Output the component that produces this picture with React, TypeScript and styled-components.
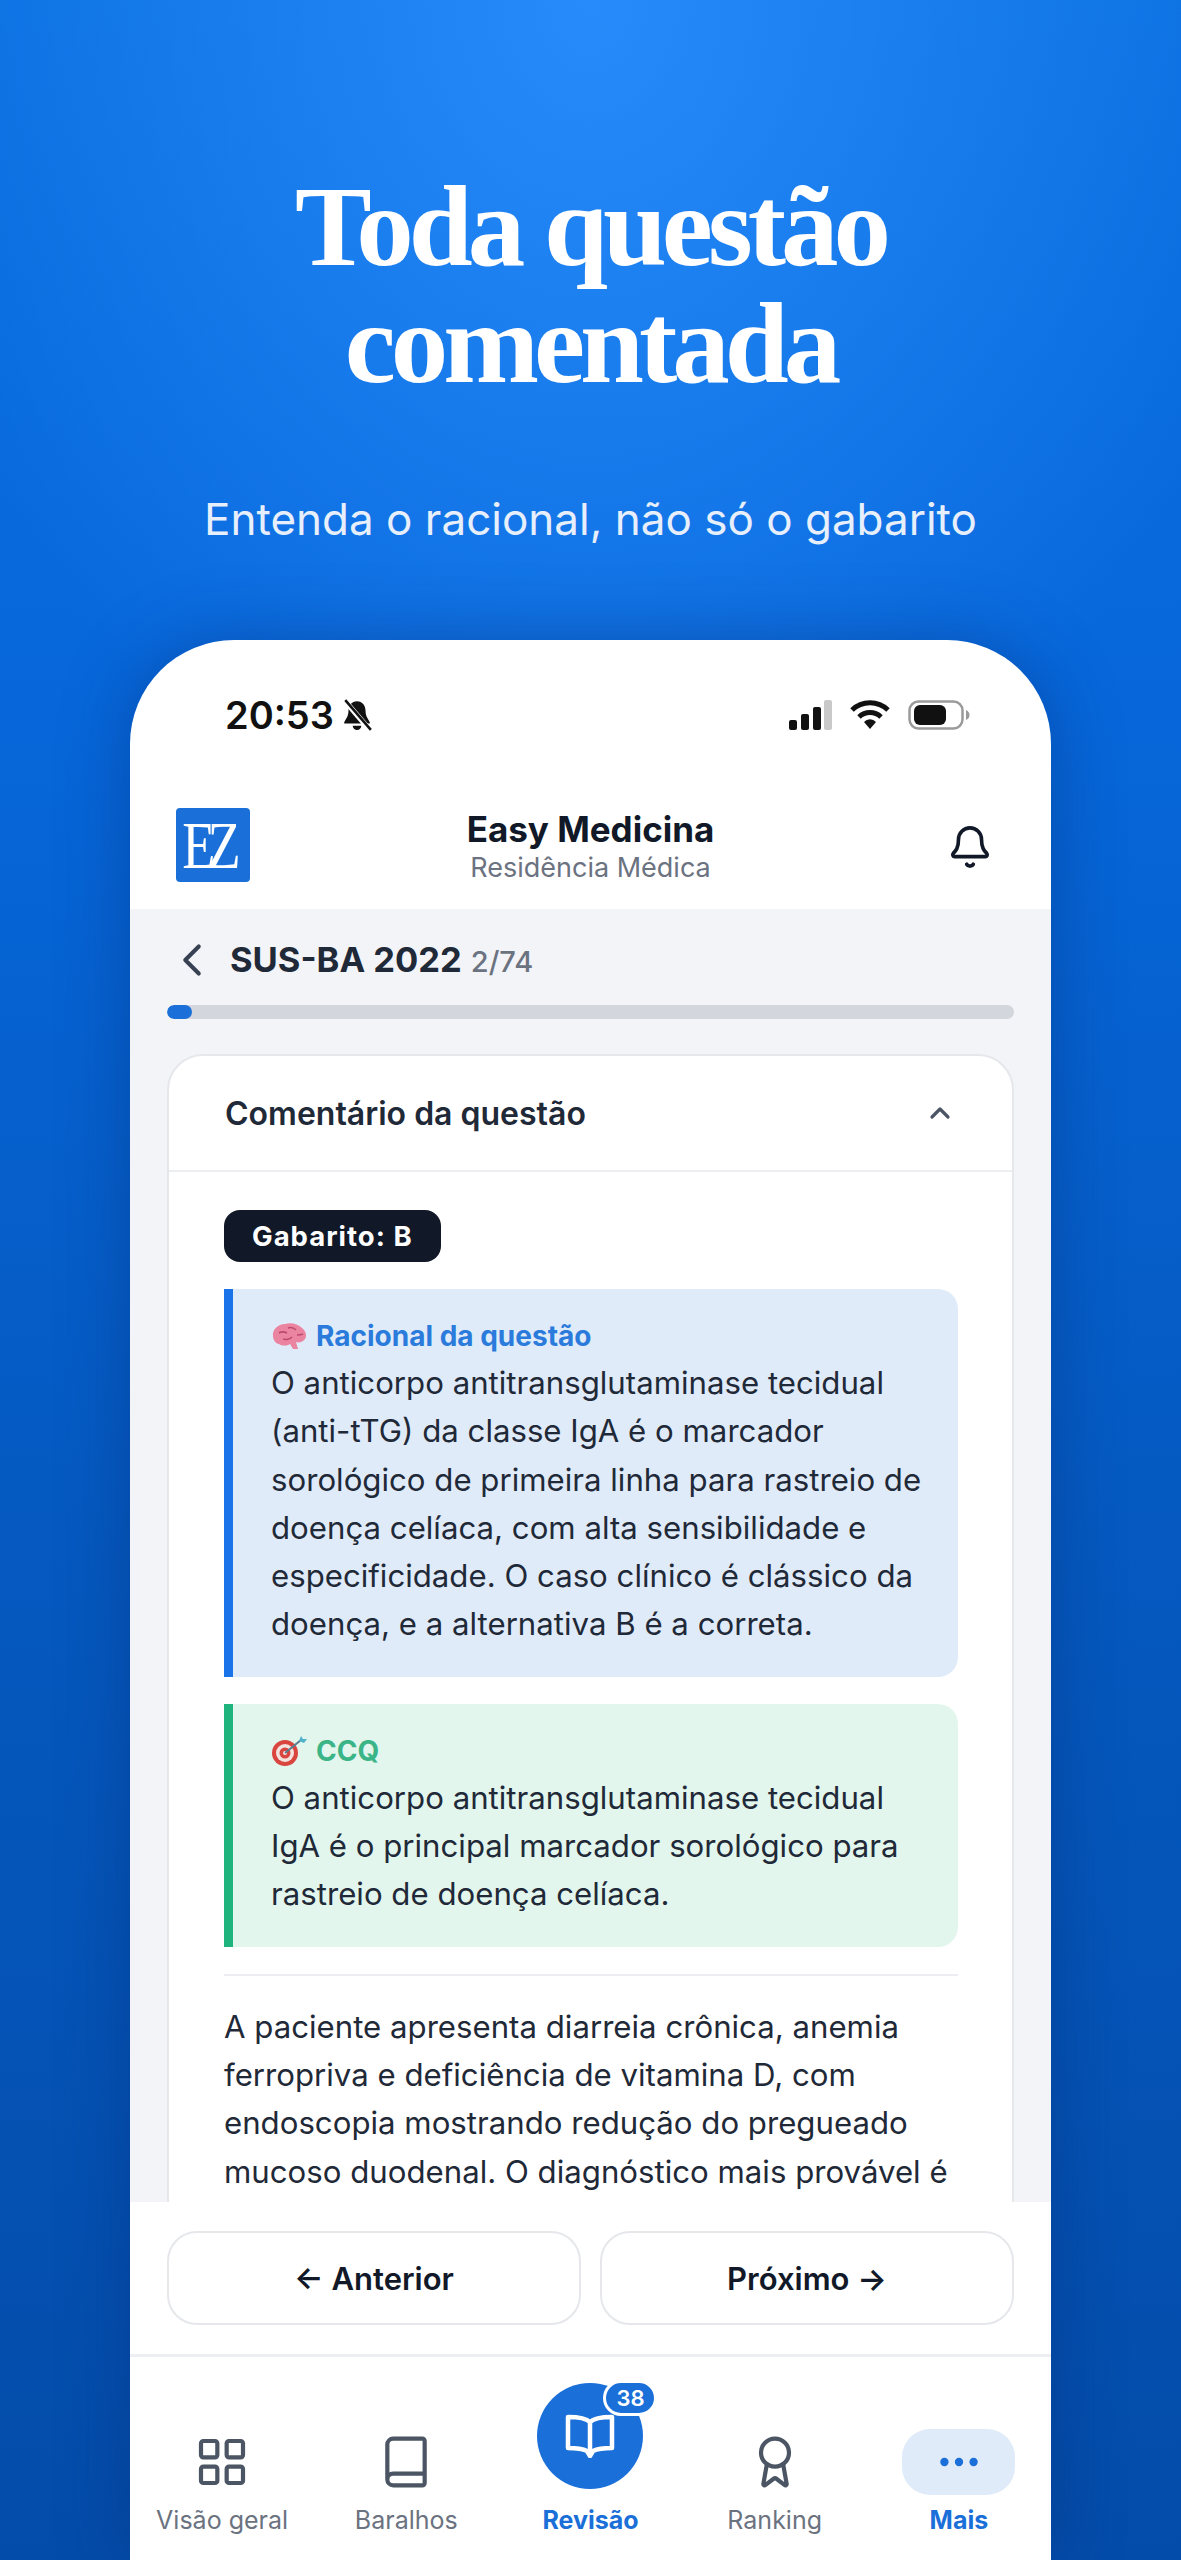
import React from "react";
import styled, { createGlobalStyle } from "styled-components";
import { ChevronLeft, ChevronUp, Bell, LayoutGrid, Book, Award, Ellipsis } from "lucide-react";

const GlobalStyle = createGlobalStyle`
  html, body {
    margin: 0;
    padding: 0;
  }
  * {
    box-sizing: border-box;
  }
`;

const SANS = `Inter, "Liberation Sans", sans-serif`;

const ReviewBook = () => (
  <svg width="50" height="44" viewBox="0 0 50 44">
    <path
      d="M25 8C21 4 12 3 3 3v31c9 0 15 1 19 3l3 5 3-5c4-2 10-3 19-3V3c-9 0-18 1-22 5z"
      fill="none"
      stroke="#fff"
      strokeWidth="4.500"
      strokeLinejoin="round"
    />
    <path d="M25 8v30" stroke="#fff" strokeWidth="4.500" />
  </svg>
);

const NAV_ITEMS = [
  { label: "Visão geral", Icon: LayoutGrid },
  { label: "Baralhos", Icon: Book },
  { label: "Revisão", center: true },
  { label: "Ranking", Icon: Award },
  { label: "Mais", Icon: Ellipsis, pill: true },
];

const App = () => {
  return (
    <Page>
      <GlobalStyle />
      <Heading>
        Toda questão
        <br />
        comentada
      </Heading>
      <Subtitle>Entenda o racional, não só o gabarito</Subtitle>
      <Phone>
        <StatusBar>
          <Clock>
            20:53
            <svg width="32" height="32" viewBox="0 0 30 30">
              <path d="M15 2c-5 0-8 4-8 9 0 6-3 8-4 11v1h24v-1c-1-3-4-5-4-11 0-5-3-9-8-9z" fill="#111" />
              <path d="M11 25h8a4 4 0 0 1-8 0z" fill="#111" />
              <path d="M3 1l24 28" stroke="#fff" strokeWidth="5" />
              <path d="M4 1l24 28" stroke="#111" strokeWidth="2.4" />
            </svg>
          </Clock>
          <StatusIcons>
            <svg width="43" height="30" viewBox="0 0 43 30">
              <rect x="0" y="20" width="8" height="10" rx="2" fill="#111" />
              <rect x="12" y="14" width="8" height="16" rx="2" fill="#111" />
              <rect x="24" y="7" width="8" height="23" rx="2" fill="#111" />
              <rect x="35" y="0" width="8" height="30" rx="2" fill="#c9c9c9" />
            </svg>
            <svg width="40" height="30" viewBox="0 0 40 30">
              <path d="M2 10a26 26 0 0 1 36 0" fill="none" stroke="#111" strokeWidth="5" />
              <path d="M9 17a16 16 0 0 1 22 0" fill="none" stroke="#111" strokeWidth="5" />
              <path d="M14 22a8 8 0 0 1 12 0l-6 7z" fill="#111" />
            </svg>
            <svg width="62" height="30" viewBox="0 0 62 30">
              <rect x="1.5" y="1.5" width="53" height="27" rx="9" fill="none" stroke="#9a9a9a" strokeWidth="2.5" />
              <rect x="6" y="5" width="32" height="20" rx="6" fill="#111" />
              <path d="M58 10c2.500 1 3.500 3 3.500 5s-1 4-3.500 5z" fill="#9a9a9a" />
            </svg>
          </StatusIcons>
        </StatusBar>

        <AppHeader>
          <Logo>
            <LogoText>EZ</LogoText>
          </Logo>
          <Titles>
            <AppTitle>Easy Medicina</AppTitle>
            <AppSubtitle>Residência Médica</AppSubtitle>
          </Titles>
          <BellSlot>
            <Bell size={46} color="#111827" strokeWidth={1.9} />
          </BellSlot>
        </AppHeader>

        <Content>
          <BackRow>
            <ChevronLeft size={54} color="#374151" strokeWidth={1.8} />
            <ExamName>SUS-BA 2022</ExamName>
            <ExamCount>2/74</ExamCount>
          </BackRow>
          <Progress>
            <ProgressFill style={{ width: `${(2 / 74) * 100 + 0.3}%` }} />
          </Progress>
          <Card>
            <CardHead>
              <CardTitle>Comentário da questão</CardTitle>
              <ChevronUp size={32} color="#4b5563" strokeWidth={2.4} />
            </CardHead>
            <CardBody>
              <AnswerBadge>Gabarito: B</AnswerBadge>
              <Callout $bar="#1a73e8" $bg="#e0ebf9">
                <CalloutTitle $color="#2a7bdb">
                  <BrainEmoji />
                  Racional da questão
                </CalloutTitle>
                <CalloutText>
                  O anticorpo antitransglutaminase tecidual
                  <br />
                  (anti-tTG) da classe IgA é o marcador
                  <br />
                  sorológico de primeira linha para rastreio de
                  <br />
                  doença celíaca, com alta sensibilidade e
                  <br />
                  especificidade. O caso clínico é clássico da
                  <br />
                  doença, e a alternativa B é a correta.
                </CalloutText>
              </Callout>
              <Callout $bar="#1fb47d" $bg="#e2f6ee">
                <CalloutTitle $color="#3bb587">
                  <TargetEmoji />
                  CCQ
                </CalloutTitle>
                <CalloutText>
                  O anticorpo antitransglutaminase tecidual
                  <br />
                  IgA é o principal marcador sorológico para
                  <br />
                  rastreio de doença celíaca.
                </CalloutText>
              </Callout>
              <Divider />
              <Paragraph>
                A paciente apresenta diarreia crônica, anemia
                <br />
                ferropriva e deficiência de vitamina D, com
                <br />
                endoscopia mostrando redução do pregueado
                <br />
                mucoso duodenal. O diagnóstico mais provável é
              </Paragraph>
            </CardBody>
          </Card>
        </Content>

        <Actions>
          <ActionButton>← Anterior</ActionButton>
          <ActionButton>Próximo →</ActionButton>
        </Actions>

        <Nav>
          {NAV_ITEMS.map(({ label, Icon, center, pill }) => (
            <NavItem key={label}>
              {center || !Icon ? (
                <ReviewCircle>
                  <ReviewBook />
                  <CountBadge>38</CountBadge>
                </ReviewCircle>
              ) : (
                <NavIcon $pill={pill}>
                  <Icon size={pill ? 50 : 56} color={pill ? "#1a6fd8" : "#4b5563"} strokeWidth={pill ? 2 : 1.8} />
                </NavIcon>
              )}
              <NavLabel $active={center || pill}>{label}</NavLabel>
            </NavItem>
          ))}
        </Nav>
      </Phone>
    </Page>
  );
};

const BrainEmoji = () => (
  <svg width="36" height="30" viewBox="0 0 36 30">
    <path d="M2 15C1 9 7 3 14 3c6-2 13 0 17 4 4 3 5 8 3 11-2 3-6 4-9 3l2 7h-5l-3-5c-3 2-8 2-11 0-3 0-6-4-6-8z" fill="#ea84a0" />
    <path d="M8 12c3-2 6-1 8 0M17 7c3-1 6 0 8 2M12 18c3 1 7 0 9-2M26 14c2 0 4 0 6-1" fill="none" stroke="#bd4a6e" strokeWidth="1.600" />
  </svg>
);

const TargetEmoji = () => (
  <svg width="36" height="32" viewBox="0 0 36 32">
    <circle cx="14" cy="18" r="13" fill="#d9453f" />
    <circle cx="14" cy="18" r="9" fill="#f4e3df" />
    <circle cx="14" cy="18" r="5.500" fill="#d9453f" />
    <circle cx="14" cy="18" r="2" fill="#f4e3df" />
    <path d="M14 18L30 5" stroke="#5a7d8f" strokeWidth="2" />
    <path d="M28 6l2-5 2 3 4 0-3 4z" fill="#4fb3c9" />
  </svg>
);

export default App;

const Page = styled.div`
  width: 1181px;
  height: 2560px;
  overflow: hidden;
  display: flex;
  flex-direction: column;
  align-items: center;
  padding-top: 168px;
  font-family: ${SANS};
  background:
    radial-gradient(ellipse 700px 900px at 590px 0, rgba(44, 144, 255, 0.85), rgba(44, 144, 255, 0) 100%),
    linear-gradient(180deg, #0a6fe0 0%, #0768dc 25%, #0559c0 60%, #044ca9 100%);
`;

const Heading = styled.h1`
  margin: 0;
  color: #fff;
  font-family: "Liberation Serif", serif;
  font-weight: 700;
  font-size: 115px;
  line-height: 117px;
  letter-spacing: -5px;
  text-align: center;
`;

const Subtitle = styled.p`
  margin: 89px 0 0;
  color: #e6effb;
  font-size: 44px;
  line-height: 56px;
  font-weight: 400;
`;

const Phone = styled.div`
  margin-top: 93px;
  width: 921px;
  flex: 1;
  min-height: 0;
  display: flex;
  flex-direction: column;
  background: #fff;
  border-radius: 104px 104px 0 0;
  box-shadow: 0 0 70px rgba(2, 40, 110, 0.4);
  overflow: hidden;
`;

const StatusBar = styled.div`
  display: flex;
  align-items: center;
  justify-content: space-between;
  padding: 36px 81px 0 95px;
  height: 114px;
  flex: none;
`;

const Clock = styled.div`
  display: flex;
  align-items: center;
  gap: 7px;
  color: #111;
  font-size: 38px;
  font-weight: 600;
  line-height: 46px;
`;

const StatusIcons = styled.div`
  display: flex;
  align-items: center;
  gap: 18px;
`;

const AppHeader = styled.div`
  height: 155px;
  flex: none;
  display: grid;
  grid-template-columns: 1fr auto 1fr;
  align-items: center;
  padding: 26px 46px 0;
`;

const Logo = styled.div`
  width: 74px;
  height: 74px;
  border-radius: 4px;
  background: #1a6fd8;
  display: flex;
  align-items: center;
  justify-content: center;
  overflow: hidden;
`;

const LogoText = styled.span`
  color: #fff;
  font-family: "Liberation Serif", serif;
  font-size: 68px;
  line-height: 74px;
  letter-spacing: -10px;
  margin-left: -10px;
  transform: scaleX(0.8);
`;

const Titles = styled.div`
  display: flex;
  flex-direction: column;
  align-items: center;
  margin-top: 3px;
`;

const AppTitle = styled.div`
  color: #111827;
  font-size: 35px;
  line-height: 44px;
  font-weight: 700;
`;

const AppSubtitle = styled.div`
  color: #6b7280;
  font-size: 27px;
  line-height: 34px;
`;

const BellSlot = styled.div`
  display: flex;
  justify-content: flex-end;
  margin: 4px 12px 0 0;
`;

const Content = styled.div`
  flex: 1;
  min-height: 0;
  overflow: hidden;
  background: #f2f4f8;
  padding: 28px 37px 0;
`;

const BackRow = styled.div`
  display: flex;
  align-items: baseline;
  height: 46px;

  svg {
    align-self: center;
    margin: 0 11px 0 -2px;
  }
`;

const ExamName = styled.span`
  color: #1f2937;
  font-size: 34.500px;
  line-height: 46px;
  font-weight: 700;
`;

const ExamCount = styled.span`
  margin-left: 9px;
  color: #6b7280;
  font-size: 29px;
  font-weight: 500;
`;

const Progress = styled.div`
  margin-top: 22px;
  height: 14px;
  border-radius: 7px;
  background: #d3d6dc;
  overflow: hidden;
`;

const ProgressFill = styled.div`
  height: 100%;
  border-radius: 7px;
  background: #1a6fd8;
`;

const Card = styled.div`
  margin-top: 35px;
  background: #fff;
  border: 2px solid #e5e7eb;
  border-radius: 36px;
`;

const CardHead = styled.div`
  height: 116px;
  display: flex;
  align-items: center;
  justify-content: space-between;
  padding: 0 56px;
  border-bottom: 2px solid #eceef2;
`;

const CardTitle = styled.div`
  color: #1f2937;
  font-size: 32px;
  font-weight: 600;
`;

const CardBody = styled.div`
  padding: 38px 54px 80px 55px;
`;

const AnswerBadge = styled.div`
  display: inline-block;
  height: 52px;
  padding: 0 28px;
  border-radius: 16px;
  background: #111827;
  color: #fff;
  font-size: 27.500px;
  line-height: 52px;
  font-weight: 700;
  letter-spacing: 1px;
  margin-bottom: 27px;
  vertical-align: top;
`;

const Callout = styled.div<{ $bar: string; $bg: string }>`
  border-left: 9px solid ${(p) => p.$bar};
  background: ${(p) => p.$bg};
  border-radius: 0 20px 20px 0;
  padding: 27px 20px 28px 38px;
  margin-bottom: 27px;
`;

const CalloutTitle = styled.div<{ $color: string }>`
  display: flex;
  align-items: center;
  gap: 9px;
  color: ${(p) => p.$color};
  font-size: 28px;
  line-height: 40px;
  font-weight: 700;
`;

const CalloutText = styled.div`
  color: #1f2937;
  font-size: 31.200px;
  line-height: 48.300px;
  margin-top: 3px;
  white-space: nowrap;
`;

const Divider = styled.div`
  height: 2px;
  background: #eceef2;
`;

const Paragraph = styled.p`
  margin: 27px 0 0;
  color: #1f2937;
  font-size: 31.200px;
  line-height: 48.300px;
  white-space: nowrap;
`;

const Actions = styled.div`
  height: 155px;
  flex: none;
  display: grid;
  grid-template-columns: 1fr 1fr;
  gap: 19px;
  padding: 29px 37px;
  background: #fff;
  border-bottom: 3px solid #eceef2;
`;

const ActionButton = styled.div`
  display: flex;
  align-items: center;
  justify-content: center;
  border: 2px solid #e5e7eb;
  border-radius: 30px;
  background: #fff;
  color: #111827;
  font-size: 31px;
  font-weight: 600;
`;

const Nav = styled.div`
  height: 203px;
  flex: none;
  display: grid;
  grid-template-columns: repeat(5, 1fr);
  background: #fff;
`;

const NavItem = styled.div`
  display: flex;
  flex-direction: column;
  align-items: center;
  justify-content: flex-end;
  padding-bottom: 24px;
`;

const NavIcon = styled.div<{ $pill?: boolean }>`
  width: 113px;
  height: 66px;
  display: flex;
  align-items: center;
  justify-content: center;
  border-radius: 28px;
  background: ${(p) => (p.$pill ? "#e0ebf9" : "transparent")};
`;

const ReviewCircle = styled.div`
  position: relative;
  width: 106px;
  height: 106px;
  border-radius: 50%;
  background: #1a6fd8;
  display: flex;
  align-items: center;
  justify-content: center;
  margin-bottom: 6px;
`;

const CountBadge = styled.div`
  position: absolute;
  top: -3px;
  right: -14px;
  width: 54px;
  height: 36px;
  border-radius: 18px;
  border: 3px solid #fff;
  background: #1a6fd8;
  color: #fff;
  font-size: 22px;
  font-weight: 600;
  line-height: 30px;
  text-align: center;
`;

const NavLabel = styled.div<{ $active?: boolean }>`
  margin-top: 9px;
  color: ${(p) => (p.$active ? "#1a6fd8" : "#6b7280")};
  font-size: 25px;
  line-height: 32px;
  font-weight: ${(p) => (p.$active ? 700 : 400)};
`;
